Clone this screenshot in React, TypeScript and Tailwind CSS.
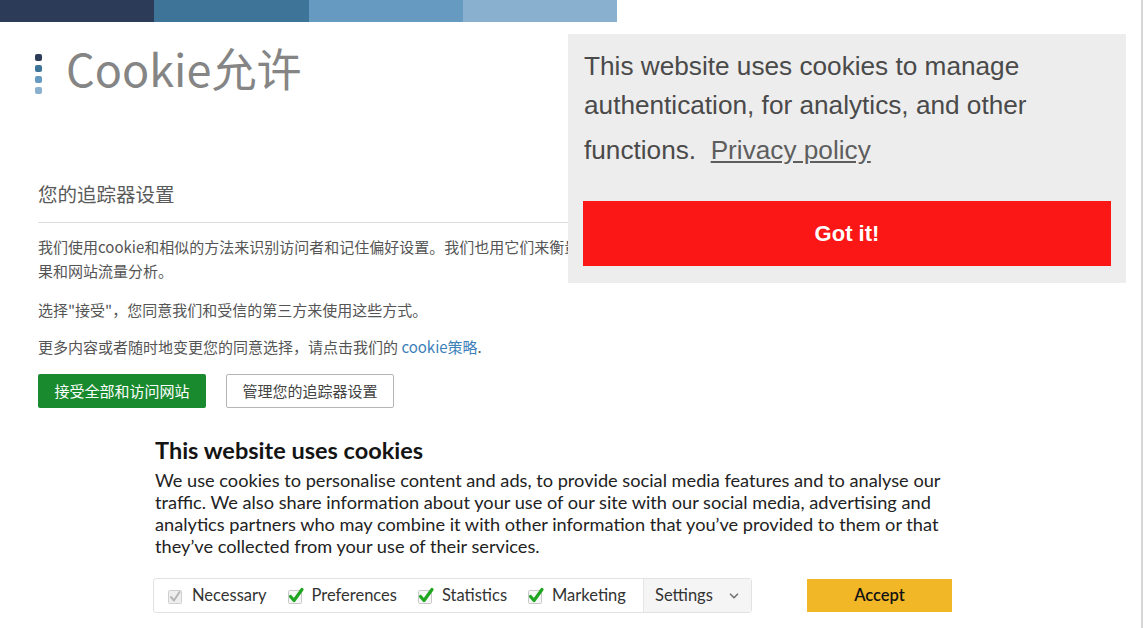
import { ChevronDown } from "lucide-react";

const cn = "font-['Noto_Sans_CJK_SC','Noto_Sans',sans-serif]";

function Check({ necessary = false }: { necessary?: boolean }) {
  return (
    <svg width="18" height="18" viewBox="0 0 18 18" className="shrink-0">
      <rect x="1.5" y="3.5" width="13" height="13" rx="1" fill={necessary ? "#eeeeee" : "#f6f6f6"} stroke={necessary ? "#cfcfcf" : "#c8c8c8"} />
      <path
        d={necessary ? "M4 10 L7 13.5 L12.5 5" : "M3.5 9.5 L7 13.5 L15 2.5"}
        fill="none"
        stroke={necessary ? "#b5b5b5" : "#1fa51f"}
        strokeWidth={necessary ? 2 : 3.2}
        strokeLinecap="round"
        strokeLinejoin="round"
      />
    </svg>
  );
}

function Option({ label, necessary }: { label: string; necessary?: boolean }) {
  return (
    <span className="flex items-center gap-[7px]">
      <Check necessary={necessary} />
      <span>{label}</span>
    </span>
  );
}

export default function App() {
  return (
    <div className="relative h-[628px] w-[1143px] overflow-hidden border-r-2 border-[#d6d6d6] bg-white">
      <div className="flex h-[22px] w-[617px]">
        <div className="flex-1 bg-[#2c3b57]" />
        <div className="flex-1 bg-[#3f7499]" />
        <div className="flex-1 bg-[#669ac0]" />
        <div className="flex-1 bg-[#8ab0d0]" />
      </div>

      <div className="mt-[24px] flex h-[56px] items-center pl-[35px]">
        <div className="flex flex-col gap-[4px]">
          <span className="h-[7px] w-[7px] rounded-[2px] bg-[#2c3b57]" />
          <span className="h-[7px] w-[7px] rounded-[2px] bg-[#3f7499]" />
          <span className="h-[7px] w-[7px] rounded-[2px] bg-[#669ac0]" />
          <span className="h-[7px] w-[7px] rounded-[2px] bg-[#8ab0d0]" />
        </div>
        <h1 className={`mb-[14px] ml-[24px] text-[45px] leading-none text-[#858585] ${cn}`}>Cookie允许</h1>
      </div>

      <div className={`w-[700px] pl-[38px] text-[#555] ${cn}`}>
        <h2 className="mt-[80px] border-b border-[#dedede] pb-[16px] text-[19.5px] leading-[24px] text-[#5a5a5a]">您的追踪器设置</h2>
        <p className="mt-[12px] whitespace-nowrap text-[15px] leading-[24px]">
          我们使用cookie和相似的方法来识别访问者和记住偏好设置。我们也用它们来衡量活动效
          <br />
          果和网站流量分析。
        </p>
        <p className="mt-[15px] text-[15px] leading-[24px]">选择"接受"，您同意我们和受信的第三方来使用这些方式。</p>
        <p className="mt-[13px] text-[15px] leading-[24px]">
          更多内容或者随时地变更您的同意选择，请点击我们的 <a className="text-[#3d7fb8]">cookie策略</a>.
        </p>
        <div className="mt-[15px] flex gap-[20px]">
          <button className="h-[34px] w-[168px] rounded-[2px] bg-[#1a8a2e] text-[15px] text-white">接受全部和访问网站</button>
          <button className="h-[34px] w-[168px] rounded-[2px] border border-[#b5b5b5] bg-white text-[15px] text-[#444]">管理您的追踪器设置</button>
        </div>
      </div>

      <div className="ml-[153px] font-['Lato',sans-serif]">
        <h3 className="ml-[2px] mt-[28px] text-[23.5px] font-bold leading-[28px] text-[#141414]">This website uses cookies</h3>
        <p className="ml-[2px] mt-[5px] whitespace-nowrap text-[18.2px] leading-[22px] text-[#222]">
          We use cookies to personalise content and ads, to provide social media features and to analyse our
          <br />
          traffic. We also share information about your use of our site with our social media, advertising and
          <br />
          analytics partners who may combine it with other information that you’ve provided to them or that
          <br />
          they’ve collected from your use of their services.
        </p>
        <div className="mt-[21px] flex items-center">
          <div className="flex h-[35px] w-[599px] items-stretch rounded-[3px] border border-[#e2e2e2] text-[16.5px] text-[#333]">
            <div className="flex flex-1 items-center gap-[20px] pl-[13px]">
              <Option label="Necessary" necessary />
              <Option label="Preferences" />
              <Option label="Statistics" />
              <Option label="Marketing" />
            </div>
            <div className="flex w-[108px] items-center justify-between border-l border-[#e6e6e6] bg-[#f5f5f5] pl-[11px] pr-[10px]">
              <span>Settings</span>
              <ChevronDown size={14} strokeWidth={3} className="text-[#777]" />
            </div>
          </div>
          <button className="ml-[55px] h-[33px] w-[145px] bg-[#f2b727] text-[16.5px] font-semibold text-[#141414]">Accept</button>
        </div>
      </div>

      <div className="absolute left-[568px] top-[34px] h-[249px] w-[558px] bg-[#ededed] pl-[16px] pt-[13px] font-['Liberation_Sans',Arial,sans-serif] text-[#4a4a4a]">
        <p className="text-[26.2px] leading-[39px]">
          This website uses cookies to manage
          <br />
          authentication, for analytics, and other
        </p>
        <p className="mt-[6px] text-[26.2px] leading-[39px]">
          functions.&nbsp; <a className="text-[#5e5e5e] underline">Privacy policy</a>
        </p>
        <button className="ml-[-1px] mt-[31px] h-[65px] w-[528px] bg-[#fb1715] text-[22px] font-bold text-white">Got it!</button>
      </div>
    </div>
  );
}
